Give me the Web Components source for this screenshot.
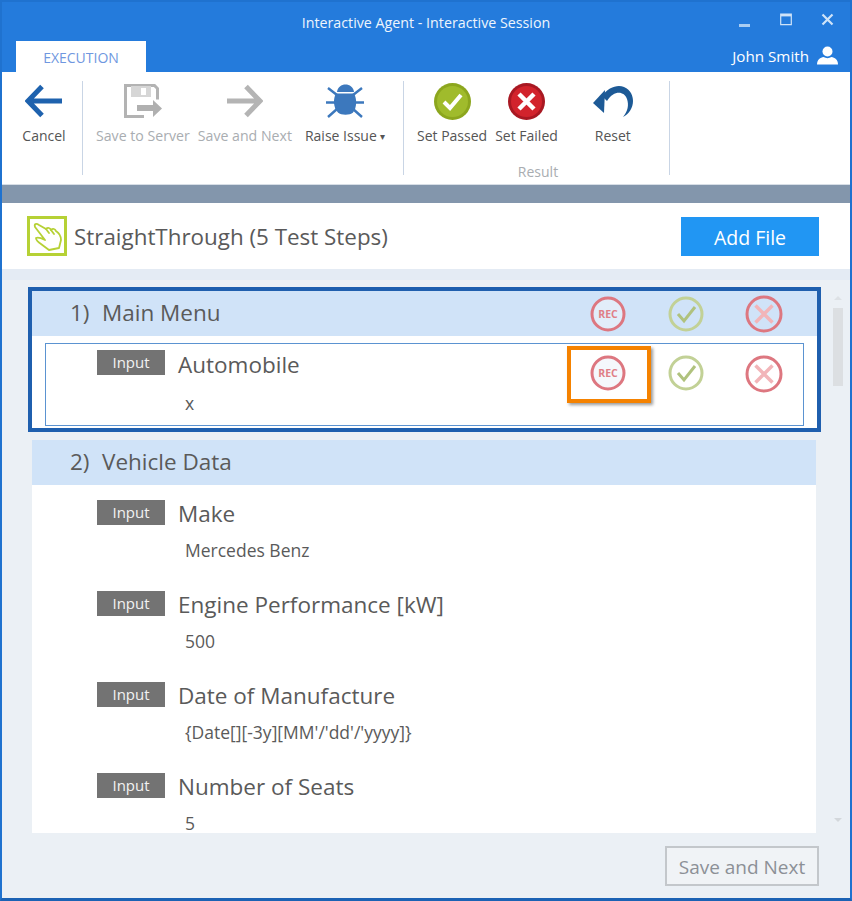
<!DOCTYPE html>
<html>
<head>
<meta charset="utf-8">
<title>Interactive Session</title>
<style>
html,body{margin:0;padding:0;background:#fff}
body{font-family:"Open Sans","Liberation Sans",sans-serif}
</style>
</head>
<body>
<app-window>
  <title-bar slot="top" user="John Smith">Interactive Agent - Interactive Session</title-bar>
  <ribbon-bar slot="top"></ribbon-bar>
  <session-head slot="top">StraightThrough (5 Test Steps)</session-head>

  <step-section number="1)" name="Main Menu" selected actions>
    <step-row name="Automobile" value="x" framed></step-row>
  </step-section>
  <step-section number="2)" name="Vehicle Data">
    <step-row name="Make" value="Mercedes Benz"></step-row>
    <step-row name="Engine Performance [kW]" value="500"></step-row>
    <step-row name="Date of Manufacture" value="{Date[][-3y][MM'/'dd'/'yyyy]}"></step-row>
    <step-row name="Number of Seats" value="5"></step-row>
  </step-section>
</app-window>

<script>
function mk(tag,css,html){
  customElements.define(tag,class extends HTMLElement{
    constructor(){
      super();
      this.attachShadow({mode:'open'}).innerHTML='<style>'+css+'</style>'+(typeof html==='function'?html(this):html);
    }
  });
}

mk('app-window',`
  :host{display:flex;flex-direction:column;box-sizing:border-box;width:852px;height:901px;border:2px solid #1f72cf;border-bottom:3px solid #1b62b4;overflow:hidden;background:#fff;color:#555}
  .main{flex:1;display:flex;min-height:0;padding:18px 0 0 26px;background:linear-gradient(#e4ebf4 0,#e4ebf4 11px,#ebf0f5 11px)}
  .list{width:793px;height:546px;overflow:hidden;display:flex;flex-direction:column;gap:8px}
  .foot{height:65px;flex:none;display:flex;justify-content:flex-end;align-items:flex-start;padding:13px 31px 0 0;background:#ebf0f5;box-sizing:border-box}
  .save{box-sizing:border-box;width:154px;height:40px;border:2px solid #c3c7cb;background:#f0f3f6;color:#8c9096;font:19px/38px "Open Sans",sans-serif;text-align:center}
`,`
  <slot name="top"></slot>
  <div class="main">
    <div class="list"><slot></slot></div>
    <scroll-track></scroll-track>
  </div>
  <div class="foot"><div class="save">Save and Next</div></div>
`);

mk('scroll-track',`
  :host{display:flex;flex-direction:column;align-items:center;width:12px;height:546px;margin-left:11px;box-sizing:border-box;padding-top:9px}
  .up,.down{width:0;height:0;border-left:4px solid transparent;border-right:4px solid transparent}
  .up{border-bottom:4px solid #dde1e5}
  .down{border-top:4px solid #d3d7db;margin-top:432px}
  .thumb{width:10px;height:78px;margin-top:8px;background:#dcdfe2}
`,`<div class="up"></div><div class="thumb"></div><div class="down"></div>`);

mk('title-bar',`
  :host{display:block;background:#247bdc;color:#fff;height:70px}
  .one{display:grid;grid-template-columns:1fr auto 1fr;height:39px;align-items:center}
  .t{font-size:14.250px;margin-top:1px;color:#eef5fd}
  .win{display:flex;justify-content:flex-end;align-items:flex-start;gap:29px;padding:11px 16px 0 0;height:28px;align-self:start}
  .two{display:flex;justify-content:space-between;height:31px}
  .tab{margin-left:14px;width:130px;height:31px;background:#fff;color:#6f97e0;font-size:14px;line-height:34px;text-align:center}
  .user{display:flex;align-items:center;gap:8px;padding:0 12px 2px 0;box-sizing:border-box;font-size:15.200px;height:31px}
  svg{display:block}
`,t=>`
  <div class="one">
    <span></span><span class="t"><slot></slot></span>
    <div class="win">
      <svg width="13" height="16" viewBox="0 0 13 16"><rect x="1" y="11" width="11" height="3" fill="#a9cdf2"/></svg>
      <svg width="12" height="13" viewBox="0 0 12 13"><path d="M.7 1h10.600v10.600H.7z" fill="none" stroke="#cfe3f8" stroke-width="1.200"/><rect x="1" y="1" width="10" height="2.400" fill="#cfe3f8"/></svg>
      <svg width="13" height="13" viewBox="0 0 13 13"><path d="M1.500 1.500l10 10M11.500 1.500l-10 10" stroke="#cfe3f8" stroke-width="2.200"/></svg>
    </div>
  </div>
  <div class="two">
    <div class="tab">EXECUTION</div>
    <div class="user"><span>${t.getAttribute('user')}</span>
      <svg width="21" height="19" viewBox="0 0 21 19"><circle cx="10.500" cy="5.500" r="5" fill="#fff"/><path d="M0 18.500c0-5 3.500-7 6.500-7.500 2.500 1.500 5.500 1.500 8 0 3 .5 6.500 2.500 6.500 7.500z" fill="#fff"/></svg>
    </div>
  </div>
`);

const ICONS={
  cancel:`<svg width="38" height="34" viewBox="0 0 38 34"><path d="M17 2.500L3 17l14 14.500M3.500 17H37" fill="none" stroke="#1e62ae" stroke-width="5"/></svg>`,
  save:`<svg width="38" height="34" viewBox="0 0 38 34"><path d="M20 32.500H1.500V1.500h29l3 3v11" fill="none" stroke="#b3b3b3" stroke-width="3"/><rect x="7" y="2" width="20" height="11" fill="#d6d6d6"/><rect x="17" y="4" width="5" height="7" fill="#fff"/><path d="M13 21h16v-5l9 8.500-9 8.500v-6H13z" fill="#b0b0b0"/></svg>`,
  next:`<svg width="36" height="34" viewBox="0 0 36 34"><path d="M19 2.500L33 17 19 31.500M33 17H0" fill="none" stroke="#b4b4b4" stroke-width="5"/></svg>`,
  bug:`<svg width="38" height="34" viewBox="0 0 38 34"><path d="M11 8C12-2 27-2 28 8z" fill="#3c78bd"/><path d="M10 9.500h18c3 5 3 14-1 19-3 3-12 3-15 0-5-5-5-14-2-19z" fill="#3c78bd"/><path d="M2 4l9 7M36 4l-9 7M0 18.500h9M38 18.500h-9M2 33l9-8M36 33l-9-8" stroke="#3c78bd" stroke-width="2.400" fill="none"/></svg>`,
  pass:`<svg width="37" height="37" viewBox="0 0 37 37"><circle cx="18.500" cy="18.500" r="18.500" fill="#8ca61e"/><circle cx="18.500" cy="18.500" r="15.500" fill="#a0bb2c"/><path d="M10 19l6 6 11-13" fill="none" stroke="#fff" stroke-width="4"/></svg>`,
  fail:`<svg width="37" height="37" viewBox="0 0 37 37"><circle cx="18.500" cy="18.500" r="18.500" fill="#a81822"/><circle cx="18.500" cy="18.500" r="15.500" fill="#d2232c"/><path d="M11 11l15 15M26 11L11 26" stroke="#fff" stroke-width="4.500"/></svg>`,
  reset:`<svg width="42" height="34" viewBox="0 0 42 34"><path d="M10 12C16 3 26 0 32 3c7 3 9 9 9 14 0 7-4 13-10 16 5-6 6-12 4-18-3-8-13-9-20 2z" fill="#1d5a96"/><path d="M1 19l12-13-1 23z" fill="#1d5a96"/></svg>`
};

mk('ribbon-btn',`
  :host{display:flex;flex-direction:column;align-items:center;flex:none;color:#555;font-size:14px}
  :host([off]){color:#a9adb1;font-size:14.150px}
  .ic{height:38px;display:flex;align-items:center;justify-content:center;margin:1px 0 6px}
  svg{display:block}
  .l{white-space:nowrap;line-height:20px}
`,t=>`<div class="ic">${ICONS[t.getAttribute('icon')]}</div><div class="l"><slot></slot></div>`);

mk('ribbon-bar',`
  :host{display:block;height:113px;background:#fff;box-sizing:border-box}
  .r{display:flex;height:113px;box-sizing:border-box;padding-top:9px;border-bottom:1px solid #d7dee6}
  .sep{flex:none;width:1px;height:94px;background:#c9d5e5}
  .grp{display:flex;flex:none;position:relative;height:94px;align-items:flex-start;box-sizing:border-box}
  .cap{position:absolute;left:3px;right:0;bottom:-6px;text-align:center;font-size:14px;color:#a9adb1;line-height:18px}
`,`
  <div class="r">
    <div class="grp" style="width:80px;justify-content:center;padding-left:4px"><ribbon-btn icon="cancel">Cancel</ribbon-btn></div>
    <div class="sep"></div>
    <div class="grp" style="width:320px;padding-left:13px">
      <ribbon-btn off icon="save">Save to Server</ribbon-btn>
      <ribbon-btn off icon="next" style="margin-left:8px">Save and Next</ribbon-btn>
      <ribbon-btn icon="bug" style="margin-left:13px">Raise Issue <span style="font-size:10px;vertical-align:1px">&#9662;</span></ribbon-btn>
    </div>
    <div class="sep"></div>
    <div class="grp" style="width:265px;padding-left:13px">
      <ribbon-btn icon="pass">Set Passed</ribbon-btn>
      <ribbon-btn icon="fail" style="margin-left:8px">Set Failed</ribbon-btn>
      <ribbon-btn icon="reset" style="margin-left:34px">Reset</ribbon-btn>
      <div class="cap">Result</div>
    </div>
    <div class="sep"></div>
  </div>
`);

mk('session-head',`
  :host{display:flex;align-items:center;flex:none;height:84px;box-sizing:border-box;border-top:18px solid #8396ac;padding:0 31px 0 25px;background:#fff}
  .box{box-sizing:border-box;width:40px;height:40px;border:3px solid #b6d135;display:flex;align-items:center;justify-content:center;margin-right:7px}
  .t{flex:1;font-size:22.400px;color:#5a5a5a}
  .add{width:138px;height:39px;background:#2196f3;color:#fff;font-size:19.500px;line-height:42px;text-align:center}
`,`
  <div class="box"><svg width="30" height="30" viewBox="0 0 30 30" fill="none" stroke="#b6d135" stroke-width="1.800" stroke-linejoin="round" stroke-linecap="round"><path d="M3 6C2 3 4 2 7 4l7 4c2-2 4-1 5 1 2-2 4-1 5 1 3 2 5 6 5 9l-2 8-10 2-8-6c-3-2-5-4-5-6 2-1 5 0 9 2z"/><path d="M14 8l3 4M19 9l3 4"/></svg></div>
  <div class="t"><slot></slot></div>
  <div class="add">Add File</div>
`);

mk('step-mark',`
  :host{display:flex;justify-content:center;align-items:flex-start;width:78px;flex:none;position:relative}
  :host([box])::after{content:"";position:absolute;left:-2px;top:-9px;width:84px;height:57px;box-sizing:border-box;border:4px solid #f58200;box-shadow:2px 2px 3px rgba(0,0,0,.4)}
  svg{display:block}
  text{font-family:"Open Sans",sans-serif;font-weight:700;font-size:10.500px;fill:#e07f87}
`,t=>{
  const k=t.getAttribute('kind');
  if(k==='rec') return `<svg width="36" height="36" viewBox="0 0 36 36"><circle cx="18" cy="18" r="16" fill="#eef3fa" fill-opacity=".6" stroke="#dd7780" stroke-width="3"/><text x="18" y="22" text-anchor="middle">REC</text></svg>`;
  if(k==='ok') return `<svg width="36" height="36" viewBox="0 0 36 36"><circle cx="18" cy="18" r="16" fill="none" stroke="#c2d196" stroke-width="3"/><path d="M10 18l6 7 11-14" fill="none" stroke="#b0c27e" stroke-width="3"/></svg>`;
  return `<svg width="38" height="38" viewBox="0 0 38 38"><circle cx="19" cy="19" r="17" fill="none" stroke="#dd7780" stroke-width="3"/><path d="M10.500 10.500l17 17M27.500 10.500l-17 17" stroke="#f2b5b9" stroke-width="3.500"/></svg>`;
});

mk('step-section',`
  :host{display:block;flex:none;margin:0 4px;background:#fff;width:784px}
  :host([selected]){width:785px;margin:0;border:4px solid #1f5fae;height:137px}
  .h{height:45px;display:flex;align-items:center;background:#d0e3f8;padding:0 0 2px 38px;font-size:22.500px;color:#5a5a5a;box-sizing:border-box}
  .n{width:32px;flex:none}
  .m{flex:1}
  .a{display:flex;padding:2px 14px 0 0;align-items:center}
`,t=>`
  <div class="h"><span class="n">${t.getAttribute('number')}</span><span class="m">${t.getAttribute('name')}</span>
  ${t.hasAttribute('actions')?`<div class="a"><step-mark kind="rec"></step-mark><step-mark kind="ok"></step-mark><step-mark kind="no"></step-mark></div>`:''}
  </div>
  <slot></slot>
`);

mk('step-row',`
  :host{display:flex;box-sizing:border-box;height:91px;padding:15px 0 0 65px;color:#5a5a5a}
  :host([framed]){height:83px;margin:7px 13px 2px 13px;padding:6px 0 0 51px;border:1px solid #5b93d1}
  .b{width:68px;height:25px;flex:none;background:#737373;color:#f2f2f2;font-size:15px;line-height:25px;text-align:center}
  .tx{flex:1;padding-left:13px}
  .name{font-size:22.500px;line-height:28px}
  .val{font-size:17.500px;line-height:22px;margin:11px 0 0 7px}
  :host([framed]) .name{margin-top:1px}
  :host([framed]) .val{margin-top:13px}
  .a{display:flex;padding-top:5px}
`,t=>`
  <div class="b">Input</div>
  <div class="tx"><div class="name">${t.getAttribute('name')}</div><div class="val">${t.getAttribute('value')}</div></div>
  ${t.hasAttribute('framed')?`<div class="a"><step-mark kind="rec" box></step-mark><step-mark kind="ok"></step-mark><step-mark kind="no"></step-mark></div>`:''}
`);
</script>
</body>
</html>
